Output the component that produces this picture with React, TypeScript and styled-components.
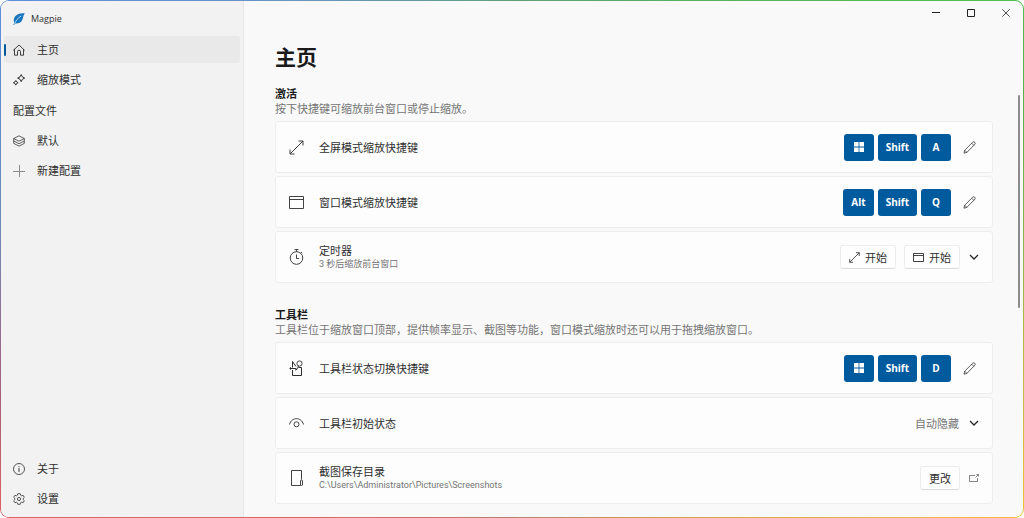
import React from "react";
import styled, { createGlobalStyle, css } from "styled-components";

const font = `"Open Sans", "Noto Sans CJK SC", sans-serif`;

const color = {
  text: "#2e2e2e",
  muted: "#747474",
  accent: "#005a9e",
  sidebar: "#f2f2f2",
  page: "#f9f9f9",
  card: "#fdfdfd",
  line: "#ededed",
};

const GlobalStyle = createGlobalStyle`
  * { box-sizing: border-box; }
  body { margin: 0; background: #fff; color: ${color.text}; font: 11px/15px ${font}; }
  h1, h2, p, ul { margin: 0; padding: 0; }
  ul { list-style: none; }
  button, select { font: inherit; color: inherit; }
  svg { display: block; flex: none; fill: none; stroke: currentColor; }
`;

const Frame = styled.div`
  min-height: 100vh;
  display: flex;
  padding: 1px;
  border-radius: 9px;
  background: conic-gradient(
    #5f9f78 0deg,
    #4fc04f 62deg,
    #5bb04a 75deg,
    #f0c040 117deg,
    #e0b050 130deg,
    #b4806c 180deg,
    #e0605f 243deg,
    #a8607c 255deg,
    #6c8cba 275deg,
    #5b8fe0 297deg,
    #6c94c0 320deg,
    #5f9f78 360deg
  );
`;

const Shell = styled.div`
  flex: 1;
  display: flex;
  min-width: 0;
  border-radius: 8px;
  overflow: hidden;
  background: ${color.page};
`;

const Sidebar = styled.aside`
  flex: none;
  width: 243px;
  display: flex;
  flex-direction: column;
  padding: 0 3px 5px;
  background: ${color.sidebar};
  border-right: 1px solid #e6e6e6;
`;

const Brand = styled.div`
  display: flex;
  align-items: center;
  gap: 6px;
  height: 35px;
  padding-left: 9px;
  font-size: 9px;
`;

const NavList = styled.ul<{ $bottom?: boolean }>`
  display: flex;
  flex-direction: column;
  gap: 3px;
  ${(p) => p.$bottom && css`margin-top: auto;`}
`;

const NavHeader = styled.li`
  display: flex;
  align-items: center;
  height: 28px;
  padding-left: 9px;
`;

const NavLink = styled.a<{ $active?: boolean }>`
  position: relative;
  display: flex;
  align-items: center;
  gap: 12px;
  height: 27px;
  padding-left: 9px;
  border-radius: 3px;
  color: inherit;
  text-decoration: none;
  ${(p) =>
    p.$active &&
    css`
      background: #e9e9e9;
      &::before {
        content: "";
        position: absolute;
        left: 0;
        top: 8px;
        width: 2px;
        height: 12px;
        border-radius: 1px;
        background: ${color.accent};
      }
    `}
`;

const Main = styled.main`
  position: relative;
  flex: 1;
  min-width: 0;
  display: flex;
  flex-direction: column;
`;

const Caption = styled.div`
  display: flex;
  justify-content: flex-end;
`;

const CaptionButton = styled.button`
  display: grid;
  place-items: center;
  width: 35px;
  height: 24px;
  padding: 0;
  border: 0;
  background: none;
  color: #222;
`;

const Content = styled.div`
  padding: 18px 30px 12px 31px;
`;

const PageTitle = styled.h1`
  font-size: 21px;
  line-height: 28px;
  font-weight: 700;
  color: #1a1a1a;
  margin-bottom: 15px;
`;

const Section = styled.section`
  & + & { margin-top: 24px; }
`;

const SectionTitle = styled.h2`
  font-size: 11px;
  line-height: 15px;
  font-weight: 700;
  color: #1a1a1a;
`;

const SectionNote = styled.p`
  color: ${color.muted};
`;

const CardList = styled.div`
  display: flex;
  flex-direction: column;
  gap: 3px;
  margin-top: 5px;
`;

const Card = styled.div`
  display: flex;
  align-items: center;
  gap: 15px;
  height: 52px;
  padding: 0 12px 0 13px;
  border: 1px solid ${color.line};
  border-radius: 3px;
  background: ${color.card};
`;

const CardText = styled.div`
  flex: 1;
  min-width: 0;
`;

const CardNote = styled.p`
  font: 9px/13px Roboto, "Noto Sans CJK SC", sans-serif;
  color: ${color.muted};
`;

const Actions = styled.div<{ $gap: number }>`
  display: flex;
  align-items: center;
  gap: ${(p) => p.$gap}px;
`;

const Key = styled.kbd`
  display: grid;
  place-items: center;
  min-width: 30px;
  height: 27px;
  padding: 0 8px;
  border-radius: 3px;
  background: ${color.accent};
  color: #fff;
  font: 700 10px/14px ${font};
`;

const IconButton = styled.button<{ $wide?: boolean }>`
  display: grid;
  place-items: center;
  width: ${(p) => (p.$wide ? 21 : 12)}px;
  height: 24px;
  padding: 0;
  border: 0;
  background: none;
`;

const PushButton = styled.button`
  display: flex;
  align-items: center;
  gap: 5px;
  height: 24px;
  padding: 0 8px;
  border: 1px solid #ededed;
  border-bottom-color: #dcdcdc;
  border-radius: 3px;
  background: #fefefe;
`;

const Picker = styled.label`
  position: relative;
  display: flex;
  align-items: center;
  svg { position: absolute; right: 1px; pointer-events: none; }
`;

const Select = styled.select`
  appearance: none;
  height: 24px;
  padding: 0 21px 0 0;
  border: 0;
  background: none;
  color: ${color.muted};
`;

const ScrollThumb = styled.div`
  position: absolute;
  right: 3px;
  top: 94px;
  width: 2px;
  height: 213px;
  border-radius: 1px;
  background: #8c8c8c;
`;

type IconProps = { size?: number };

const Svg = ({ w, h = w, children }: { w: number; h?: number; children: React.ReactNode }) => (
  <svg width={w} height={h} viewBox={`0 0 ${w} ${h}`} aria-hidden="true">
    {children}
  </svg>
);

const Feather = () => (
  <Svg w={12}>
    <path d="M11.9.2C7.5-.1 2.8 1.2 1.3 4.7c-.8 1.9-.6 3.9 0 5.3L.2 11.8l.8.1 1.1-1.5c3 .4 5.8-.5 7-3.2C10.2 5 10.3 2 11.9.2Z" fill="#1877bd" stroke="none" />
    <path d="M1.5 10.5C3 7.500 5 5 8.200 3" stroke="#cfe6f5" strokeWidth=".9" />
  </Svg>
);

const Home = () => (
  <Svg w={12}>
    <path d="M1.5 5.3 6 1l4.5 4.3v5.9h-3V7.7a1.5 1.5 0 0 0-3 0v3.5h-3V5.3M.6 6.100l.9-.8M11.4 6.100l-.9-.8" strokeWidth=".9" strokeLinejoin="round" strokeLinecap="round" />
  </Svg>
);

const Sparkle = () => (
  <Svg w={12}>
    <path d="M8.2.6 9.400 2.900l2.300 1.200L9.400 5.300 8.200 7.700 7 5.300 4.600 4.100 7 2.900ZM2.800 6.500l.8 1.400 1.500.8-1.500.8-.8 1.600L2 9.500.4 8.700 2 7.900Z" strokeLinejoin="round" />
  </Svg>
);

const Layers = () => (
  <Svg w={12}>
    <path d="M6 .8 11.3 3.500 6 6.200.7 3.500ZM.7 6 6 8.700 11.300 6M.7 8.400 6 11.100l5.300-2.700M.7 3.500v4.900M11.300 3.500v4.900" strokeWidth=".75" strokeLinejoin="round" />
  </Svg>
);

const Plus = () => (
  <Svg w={12}>
    <path d="M6.500 0v12M0 6.500h12" stroke="#8a8a8a" />
  </Svg>
);

const Info = () => (
  <Svg w={12}>
    <circle cx="6" cy="6" r="5.500" strokeWidth=".8" />
    <path d="M6 5.200v3.600M6 3.200v1" />
  </Svg>
);

const Gear = () => (
  <Svg w={12}>
    <path d="M4.800.7h2.400l.4 1.500 1 .6 1.500-.5 1.200 2-1.100 1.100v1.200l1.100 1.100-1.200 2-1.500-.5-1 .6-.4 1.500H4.800l-.4-1.500-1-.6-1.500.5-1.200-2 1.100-1.100V5.400L.7 4.300l1.200-2 1.500.5 1-.6Z" strokeWidth=".8" strokeLinejoin="round" />
    <circle cx="6" cy="6" r="1.600" strokeWidth=".8" />
  </Svg>
);

const Expand = ({ size = 15 }: IconProps) => (
  <svg width={size} height={size} viewBox="0 0 15 15" aria-hidden="true">
    <path d="M1 14 14 1M9.500 1H14v4.500M1 9.500V14h4.500" strokeWidth={size < 15 ? 1.1 : 0.9} />
  </svg>
);

const WindowIcon = ({ size = 15 }: IconProps) => (
  <Svg w={size} h={size < 15 ? 9 : 13}>
    <path d={size < 15 ? "M.5.500h10v8H.5ZM.5 2.500h10" : "M.5.500h14v12H.5ZM.5 3.500h14"} strokeWidth=".9" />
  </Svg>
);

const Timer = () => (
  <Svg w={15} h={16}>
    <circle cx="7.500" cy="9" r="6.300" strokeWidth=".9" />
    <path d="M5.500.600h4M7.500.600v2M7.500 5.500V9.500H10M12 3l1.300 1.200" strokeWidth=".9" />
  </Svg>
);

const Toolbox = () => (
  <Svg w={15} h={17}>
    <path d="M3.500 10v5.500h9v-8h-3M.5 8.500h7M3.500 7.500v-6l3.500 5M9.500 6 8.500 8.500M6 10.200l2.500-1.200M1.500 7.200v2.500" />
    <circle cx="10.500" cy="3.500" r="2.600" strokeWidth=".9" />
  </Svg>
);

const Eye = () => (
  <Svg w={15} h={10}>
    <path d="M.5 6.500C1.500 2.500 4.500.700 7.500.700s6 1.800 7 5.800" strokeWidth=".9" />
    <circle cx="7.500" cy="6.300" r="2.500" strokeWidth=".9" />
  </Svg>
);

const Page = () => (
  <Svg w={15} h={16}>
    <path d="M11 15.500H2.500V.500h10v9M11.500 15.500v-4.500a1 1 0 0 1 2 0v3a1.500 1.500 0 0 1-2.500 1.500" strokeWidth=".9" />
  </Svg>
);

const Pencil = () => (
  <Svg w={13}>
    <path d="M1 12.200 1.700 9.200 9.800 1.100a1.500 1.500 0 0 1 2.100 2.100L3.900 11.400ZM8.700 2.200l2.100 2.100M1.700 9.200 3.900 11.400" strokeWidth=".75" strokeLinejoin="round" />
  </Svg>
);

const Chevron = () => (
  <Svg w={10} h={6}>
    <path d="M1 1 5 5 9 1" strokeWidth="1.300" stroke="#262626" />
  </Svg>
);

const OpenIcon = () => (
  <Svg w={10} h={8}>
    <path d="M6 1.500H.500v6h8V4M6.500 3.500l3-3M7.500.500h2v2" strokeWidth=".8" stroke="#666" />
  </Svg>
);

const WinLogo = () => (
  <Svg w={10}>
    <path d="M0 0h4.600v4.600H0ZM5.400 0H10v4.600H5.400ZM0 5.400h4.600V10H0ZM5.400 5.400H10V10H5.400Z" fill="#fff" stroke="none" />
  </Svg>
);

function NavItem({ icon, label, active }: { icon: React.ReactNode; label: string; active?: boolean }) {
  return (
    <li>
      <NavLink href="#" $active={active} aria-current={active ? "page" : undefined}>
        {icon}
        {label}
      </NavLink>
    </li>
  );
}

function SettingCard({ icon, title, note, children }: { icon: React.ReactNode; title: string; note?: string; children: React.ReactNode }) {
  return (
    <Card>
      {icon}
      <CardText>
        <p>{title}</p>
        {note && <CardNote>{note}</CardNote>}
      </CardText>
      {children}
    </Card>
  );
}

function Shortcut({ keys }: { keys: string[] }) {
  return (
    <Actions $gap={8}>
      <Actions $gap={4}>
        {keys.map((k) => (
          <Key key={k}>{k === "Win" ? <WinLogo /> : k}</Key>
        ))}
      </Actions>
      <IconButton $wide aria-label="编辑快捷键">
        <Pencil />
      </IconButton>
    </Actions>
  );
}

export default function App() {
  return (
    <Frame>
      <GlobalStyle />
      <Shell>
        <Sidebar>
          <Brand>
            <Feather />
            Magpie
          </Brand>
          <NavList>
            <NavItem icon={<Home />} label="主页" active />
            <NavItem icon={<Sparkle />} label="缩放模式" />
            <NavHeader>配置文件</NavHeader>
            <NavItem icon={<Layers />} label="默认" />
            <NavItem icon={<Plus />} label="新建配置" />
          </NavList>
          <NavList $bottom>
            <NavItem icon={<Info />} label="关于" />
            <NavItem icon={<Gear />} label="设置" />
          </NavList>
        </Sidebar>
        <Main>
          <Caption>
            <CaptionButton aria-label="最小化">
              <Svg w={8}><path d="M0 3.500h8" /></Svg>
            </CaptionButton>
            <CaptionButton aria-label="最大化">
              <Svg w={8}><path d="M.5.500h7v7h-7Z" /></Svg>
            </CaptionButton>
            <CaptionButton aria-label="关闭">
              <Svg w={8}><path d="m.3.300 7.400 7.400M7.700.300.300 7.700" strokeWidth=".8" /></Svg>
            </CaptionButton>
          </Caption>
          <Content>
            <PageTitle>主页</PageTitle>
            <Section>
              <SectionTitle>激活</SectionTitle>
              <SectionNote>按下快捷键可缩放前台窗口或停止缩放。</SectionNote>
              <CardList>
                <SettingCard icon={<Expand />} title="全屏模式缩放快捷键">
                  <Shortcut keys={["Win", "Shift", "A"]} />
                </SettingCard>
                <SettingCard icon={<WindowIcon />} title="窗口模式缩放快捷键">
                  <Shortcut keys={["Alt", "Shift", "Q"]} />
                </SettingCard>
                <SettingCard icon={<Timer />} title="定时器" note="3 秒后缩放前台窗口">
                  <Actions $gap={8}>
                    <PushButton><Expand size={11} />开始</PushButton>
                    <PushButton><WindowIcon size={11} />开始</PushButton>
                    <IconButton aria-label="展开"><Chevron /></IconButton>
                  </Actions>
                </SettingCard>
              </CardList>
            </Section>
            <Section>
              <SectionTitle>工具栏</SectionTitle>
              <SectionNote>工具栏位于缩放窗口顶部，提供帧率显示、截图等功能，窗口模式缩放时还可以用于拖拽缩放窗口。</SectionNote>
              <CardList>
                <SettingCard icon={<Toolbox />} title="工具栏状态切换快捷键">
                  <Shortcut keys={["Win", "Shift", "D"]} />
                </SettingCard>
                <SettingCard icon={<Eye />} title="工具栏初始状态">
                  <Picker>
                    <Select aria-label="工具栏初始状态" defaultValue="auto">
                      <option value="auto">自动隐藏</option>
                    </Select>
                    <Chevron />
                  </Picker>
                </SettingCard>
                <SettingCard icon={<Page />} title="截图保存目录" note="C:\Users\Administrator\Pictures\Screenshots">
                  <Actions $gap={8}>
                    <PushButton>更改</PushButton>
                    <IconButton aria-label="打开目录"><OpenIcon /></IconButton>
                  </Actions>
                </SettingCard>
              </CardList>
            </Section>
          </Content>
          <ScrollThumb />
        </Main>
      </Shell>
    </Frame>
  );
}
